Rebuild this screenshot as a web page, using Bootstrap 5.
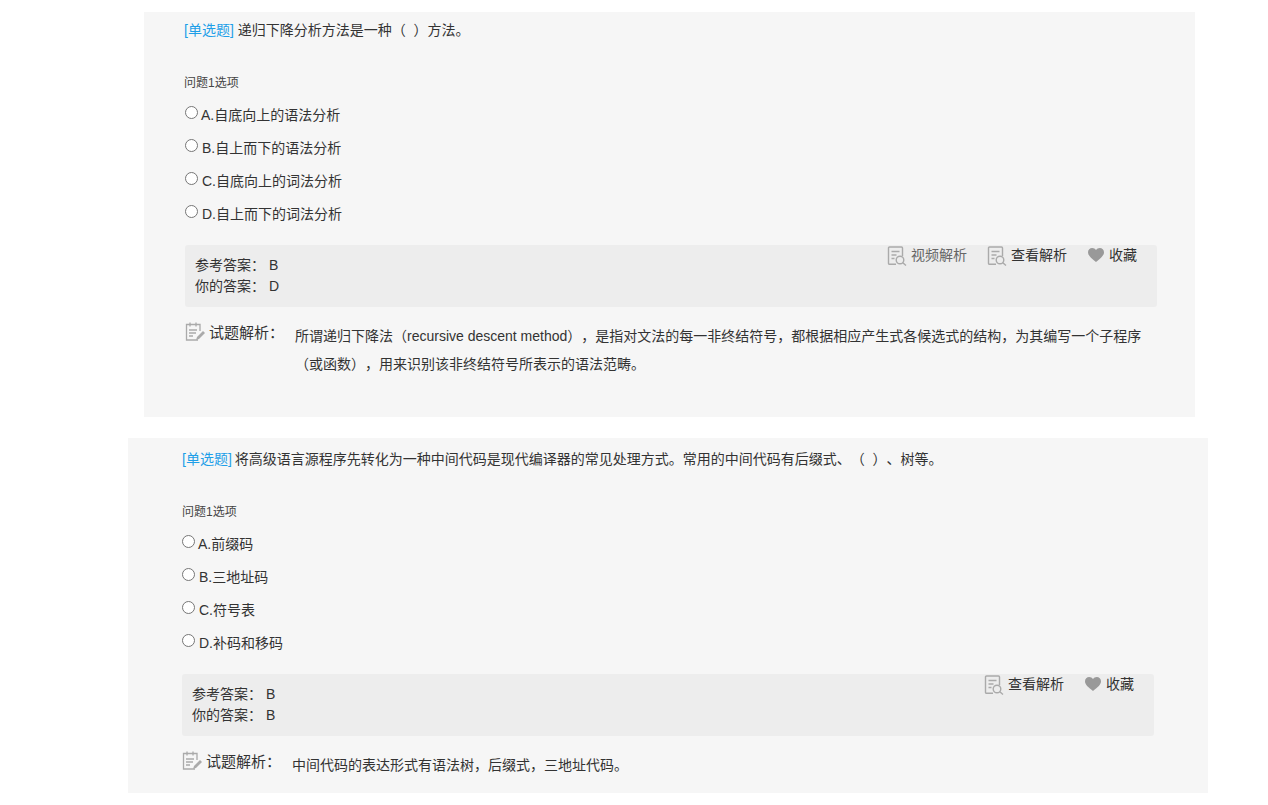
<!DOCTYPE html>
<html lang="zh"><head><meta charset="utf-8">
<link href="https://cdn.jsdelivr.net/npm/bootstrap@5.3.0/dist/css/bootstrap.min.css" rel="stylesheet">
<style>
html,body{height:805px;overflow:hidden;background:#fff}
body{font-family:"Liberation Sans","Noto Sans CJK SC",sans-serif;font-size:14px;color:#333;line-height:21px;text-spacing-trim:space-all}
.qcard{background:#f6f6f6}
.qa{margin:12px 0 0 144px;width:1051px;height:405px;padding:8px 38px 0 41px}
.qb{margin:21px 0 0 128px;width:1080px;height:355px;padding:11px 54px 0 54px}
.tag{color:#1e9fe8}
.qa .qtitle,.qa .gap-title{margin-left:-1px}
.qb .tag{margin-right:-1px}
.gap-title{margin-top:33px;font-size:12px;line-height:18px;color:#444}
.opt{height:33px;display:flex;align-items:flex-start}
.opts{margin-top:6px}
.dot{width:13px;height:13px;border:1px solid #767676;border-radius:50%;background:#fff;margin:8px 3px 0 0;flex:none}
.optx{margin-top:7px}
.opt + .opt .optx{margin-left:1px}
.ans{margin-top:15px;background:#ededed;border-radius:3px;height:62px;padding:10px 10px 0 10px;position:relative}
.ans .lab{width:74px;display:inline-block}
.tools{position:absolute;top:0;right:20px;display:flex;gap:20px;line-height:20px}
.tool{display:flex;align-items:center;gap:4px;height:20px}
.tool svg.doc{margin-top:2px}
.tool svg.hrt{margin:0 1px}
.muted{color:#666}
.ex{margin-top:15px;display:flex}
.exh{width:110px;flex:none;display:flex;gap:3px;align-items:flex-start}
.exh span{font-size:15px;line-height:21px}
.ext{line-height:28px;flex:1;color:#333}
</style></head><body>
<div class="qcard qa">
<div class="qtitle"><span class="tag">[单选题]</span> 递归下降分析方法是一种（&nbsp;&nbsp;）方法。</div>
<div class="gap-title">问题1选项</div>
<div class="opts">
<div class="opt"><span class="dot"></span><span class="optx">A.自底向上的语法分析</span></div>
<div class="opt"><span class="dot"></span><span class="optx">B.自上而下的语法分析</span></div>
<div class="opt"><span class="dot"></span><span class="optx">C.自底向上的词法分析</span></div>
<div class="opt"><span class="dot"></span><span class="optx">D.自上而下的词法分析</span></div>
</div>
<div class="ans">
<div><span class="lab">参考答案：</span>B</div>
<div><span class="lab">你的答案：</span>D</div>
<div class="tools">
<div class="tool muted"><svg class="doc" width="20" height="20" viewBox="0 0 20 20" fill="none" stroke="#aaa" stroke-width="1.4"><path d="M9 18.300H2.500a1 1 0 0 1-1-1V2a1 1 0 0 1 1-1h12a1 1 0 0 1 1 1v8"/><path d="M4.500 5.500h8M4.500 9h5M4.500 12.500h3"/><circle cx="13" cy="14" r="3.800"/><path d="M15.800 16.800L19 19.500"/></svg>视频解析</div>
<div class="tool"><svg class="doc" width="20" height="20" viewBox="0 0 20 20" fill="none" stroke="#aaa" stroke-width="1.4"><path d="M9 18.300H2.500a1 1 0 0 1-1-1V2a1 1 0 0 1 1-1h12a1 1 0 0 1 1 1v8"/><path d="M4.500 5.500h8M4.500 9h5M4.500 12.500h3"/><circle cx="13" cy="14" r="3.800"/><path d="M15.800 16.800L19 19.500"/></svg>查看解析</div>
<div class="tool"><svg class="hrt" width="16" height="14" viewBox="0 0 16 14" fill="#999"><path d="M8 14C3 10 0 7.500 0 4.200 0 1.800 1.900 0 4.200 0 5.700 0 7.200.8 8 2.100 8.800.8 10.300 0 11.800 0 14.100 0 16 1.800 16 4.200 16 7.500 13 10 8 14z"/></svg>收藏</div>
</div>
</div>
<div class="ex">
<div class="exh"><svg width="21" height="20" viewBox="0 0 21 20" fill="none" stroke="#aaa" stroke-width="1.300"><path d="M13 18H1.500V2.500H15V9"/><path d="M5 .5v4M11 .5v4M4 8h8M4 11h7M4 14h4"/><path d="M11 18l1-3 6-6 2 2-6 6z" fill="#aaa" stroke="none"/></svg><span>试题解析：</span></div>
<div class="ext">所谓递归下降法（recursive descent method），是指对文法的每一非终结符号，都根据相应产生式各候选式的结构，为其编写一个子程序（或函数），用来识别该非终结符号所表示的语法范畴。</div>
</div>
</div>
<div class="qcard qb">
<div class="qtitle"><span class="tag">[单选题]</span> 将高级语言源程序先转化为一种中间代码是现代编译器的常见处理方式。常用的中间代码有后缀式、（&nbsp;&nbsp;）、树等。</div>
<div class="gap-title">问题1选项</div>
<div class="opts">
<div class="opt"><span class="dot"></span><span class="optx">A.前缀码</span></div>
<div class="opt"><span class="dot"></span><span class="optx">B.三地址码</span></div>
<div class="opt"><span class="dot"></span><span class="optx">C.符号表</span></div>
<div class="opt"><span class="dot"></span><span class="optx">D.补码和移码</span></div>
</div>
<div class="ans">
<div><span class="lab">参考答案：</span>B</div>
<div><span class="lab">你的答案：</span>B</div>
<div class="tools">
<div class="tool"><svg class="doc" width="20" height="20" viewBox="0 0 20 20" fill="none" stroke="#aaa" stroke-width="1.4"><path d="M9 18.300H2.500a1 1 0 0 1-1-1V2a1 1 0 0 1 1-1h12a1 1 0 0 1 1 1v8"/><path d="M4.500 5.500h8M4.500 9h5M4.500 12.500h3"/><circle cx="13" cy="14" r="3.800"/><path d="M15.800 16.800L19 19.500"/></svg>查看解析</div>
<div class="tool"><svg class="hrt" width="16" height="14" viewBox="0 0 16 14" fill="#999"><path d="M8 14C3 10 0 7.500 0 4.200 0 1.800 1.900 0 4.200 0 5.700 0 7.200.8 8 2.100 8.800.8 10.300 0 11.800 0 14.100 0 16 1.800 16 4.200 16 7.500 13 10 8 14z"/></svg>收藏</div>
</div>
</div>
<div class="ex">
<div class="exh"><svg width="21" height="20" viewBox="0 0 21 20" fill="none" stroke="#aaa" stroke-width="1.300"><path d="M13 18H1.500V2.500H15V9"/><path d="M5 .5v4M11 .5v4M4 8h8M4 11h7M4 14h4"/><path d="M11 18l1-3 6-6 2 2-6 6z" fill="#aaa" stroke="none"/></svg><span>试题解析：</span></div>
<div class="ext">中间代码的表达形式有语法树，后缀式，三地址代码。</div>
</div>
</div>
<script src="https://cdn.jsdelivr.net/npm/bootstrap@5.3.0/dist/js/bootstrap.bundle.min.js"></script>
</body></html>
